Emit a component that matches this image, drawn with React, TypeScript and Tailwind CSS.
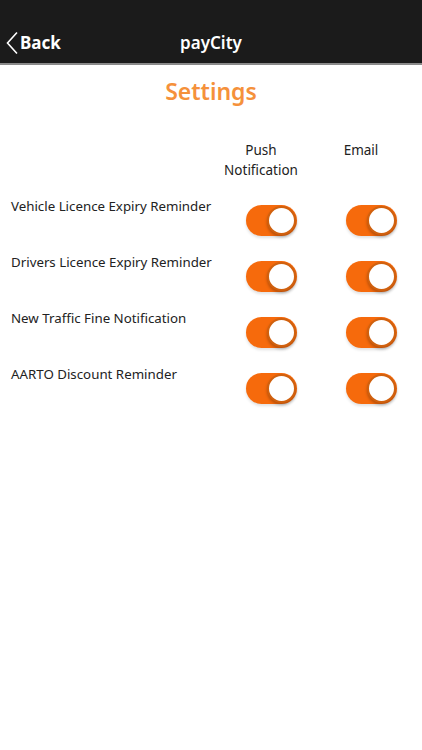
const ROWS = [
  "Vehicle Licence Expiry Reminder",
  "Drivers Licence Expiry Reminder",
  "New Traffic Fine Notification",
  "AARTO Discount Reminder",
];

function Toggle() {
  return (
    <div className="relative w-[51px] h-[31px] rounded-full bg-[#f66a0c] shadow-[0_2px_3px_rgba(0,0,0,0.12)]">
      <div className="absolute right-[1px] top-[1px] w-[29px] h-[29px] rounded-full bg-white border-2 border-[#d0610f] shadow-[0_2px_3px_rgba(0,0,0,0.25)]" />
    </div>
  );
}

export default function App() {
  return (
    <div className="w-[422px] h-[750px] bg-white font-['Noto_Sans',sans-serif] text-[#222]">
      <div className="h-[65px] bg-[#1b1b1b] border-b-2 border-[#8a8a8a] pt-[22px]">
        <div className="relative h-[42px] flex items-center justify-center">
          <div className="absolute left-[5px] top-0 h-[42px] flex items-center gap-[1px] text-white">
            <svg width="14" height="24" viewBox="0 0 14 24" fill="none">
              <path d="M12 1.5 L2.5 12 L12 22.5" stroke="white" strokeWidth="1.6" />
            </svg>
            <span className="text-[17px] font-bold">Back</span>
          </div>
          <span className="text-white text-[17px] font-semibold">payCity</span>
        </div>
      </div>

      <div className="text-center text-[#f5913b] text-[23px] font-semibold pt-[10px] leading-[32px]">
        Settings
      </div>

      <div className="grid grid-cols-[minmax(0,1fr)_100px_100px] px-[11px] mt-[33px] text-[13.5px] leading-[20px]">
        <div />
        <div className="text-center">
          Push
          <br />
          Notification
        </div>
        <div className="text-center">Email</div>
      </div>

      <div className="mt-[16px] px-[11px]">
        {ROWS.map((label) => (
          <div
            key={label}
            className="grid grid-cols-[minmax(0,1fr)_100px_100px] h-[56px] text-[13.3px] leading-[20px]"
          >
            <div className="whitespace-nowrap">{label}</div>
            <div className="flex justify-center pt-[9px] pl-[20px]">
              <Toggle />
            </div>
            <div className="flex justify-center pt-[9px] pl-[20px]">
              <Toggle />
            </div>
          </div>
        ))}
      </div>
    </div>
  );
}
